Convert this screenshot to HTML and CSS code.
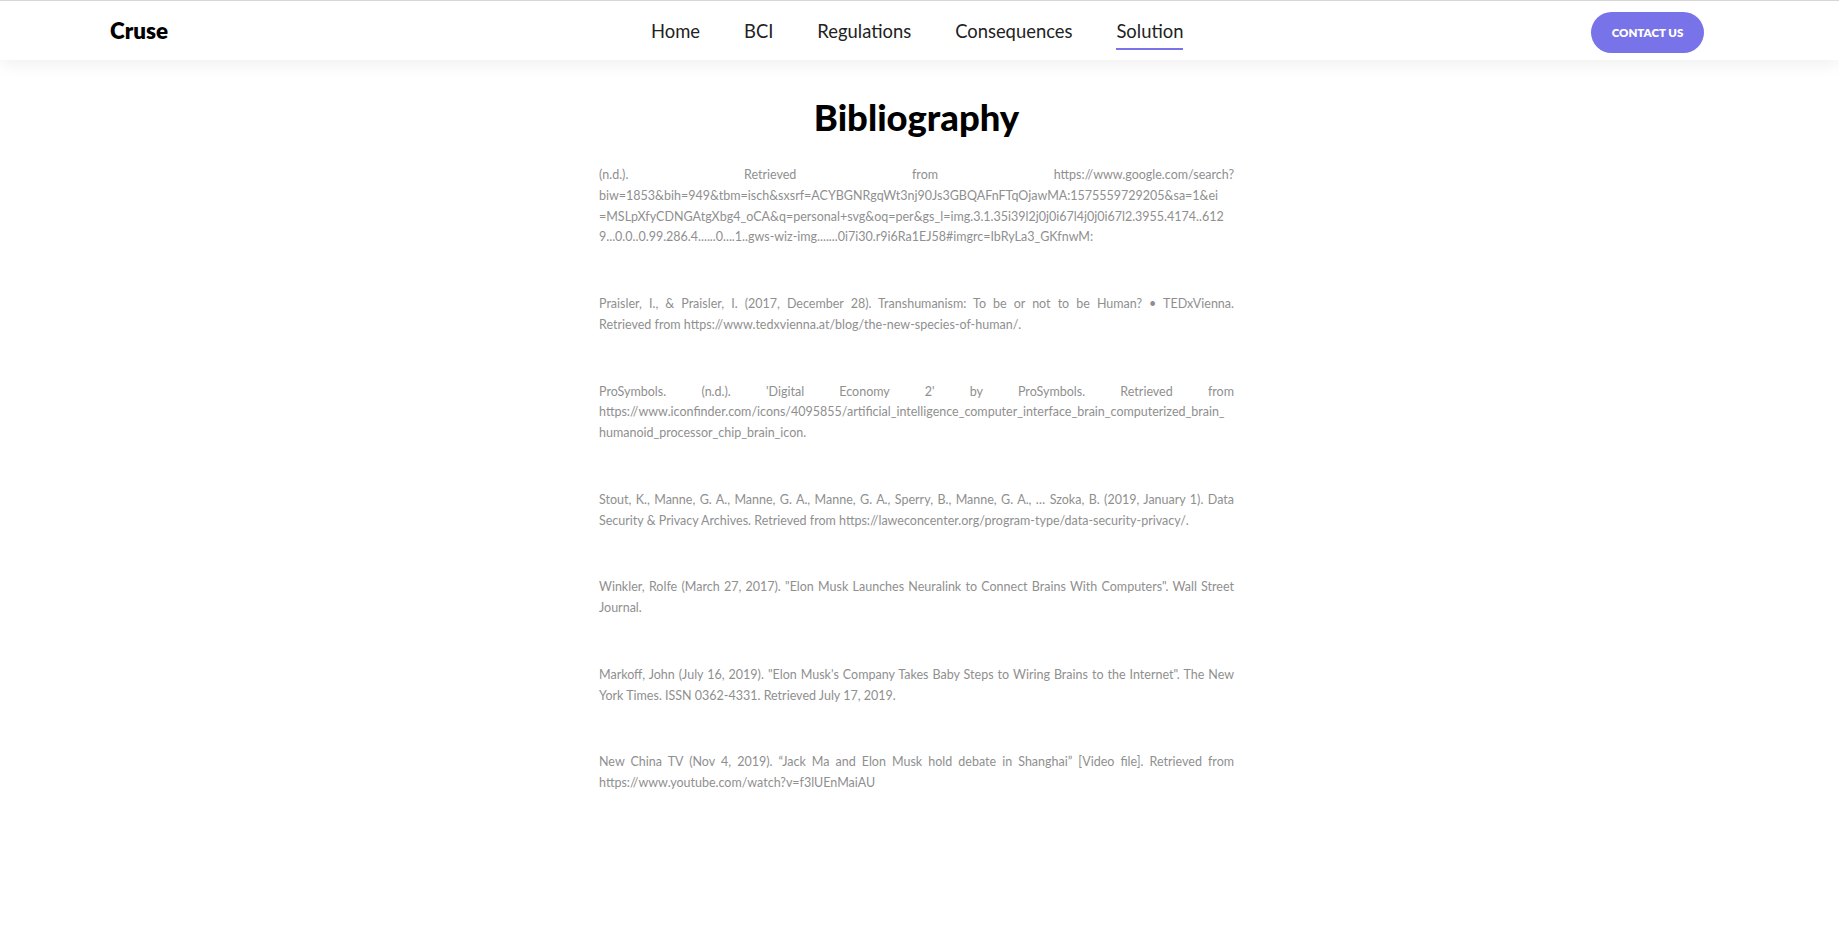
FILE: index.html
```html
<!DOCTYPE html>
<html lang="en">
<head>
<meta charset="utf-8">
<title>Bibliography - Cruse</title>
<link rel="stylesheet" href="styles.css">
</head>
<body>
<header class="site-header">
  <div class="header-inner">
    <a class="logo" href="#">Cruse</a>
    <nav class="main-nav">
      <a href="#">Home</a>
      <a href="#">BCI</a>
      <a href="#">Regulations</a>
      <a href="#">Consequences</a>
      <a href="#" class="active">Solution</a>
    </nav>
    <a class="btn-contact" href="#">CONTACT US</a>
  </div>
</header>
<main class="content">
  <h1 class="page-title">Bibliography</h1>
  <p class="ref">(n.d.). Retrieved from https://www.google.com/search?<wbr>biw=1853&amp;bih=949&amp;tbm=isch&amp;sxsrf=ACYBGNRgqWt3nj90Js3GBQAFnFTqOjawMA:1575559729205&amp;sa=1&amp;ei<br>=MSLpXfyCDNGAtgXbg4_oCA&amp;q=personal+svg&amp;oq=per&amp;gs_l=img.3.1.35i39l2j0j0i67l4j0j0i67l2.3955.4174..612<br>9...0.0..0.99.286.4......0....1..gws-wiz-img.......0i7i30.r9i6Ra1EJ58#imgrc=IbRyLa3_GKfnwM:</p>
  <p class="ref">Praisler, I., &amp; Praisler, I. (2017, December 28). Transhumanism: To be or not to be Human? • TEDxVienna. Retrieved&nbsp;from https://www.tedxvienna.at/blog/the-new-species-of-human/.</p>
  <p class="ref">ProSymbols. (n.d.). 'Digital Economy 2' by ProSymbols. Retrieved from https://www.iconfinder.com/icons/4095855/artificial_intelligence_computer_interface_brain_computerized_brain_<br>humanoid_processor_chip_brain_icon.</p>
  <p class="ref">Stout, K., Manne, G. A., Manne, G. A., Manne, G. A., Sperry, B., Manne, G. A., … Szoka, B. (2019, January 1). Data Security &amp; Privacy Archives. Retrieved from https://laweconcenter.org/program-type/data-security-privacy/.</p>
  <p class="ref">Winkler, Rolfe (March 27, 2017). "Elon Musk Launches Neuralink to Connect Brains With Computers". Wall Street Journal.</p>
  <p class="ref">Markoff, John (July 16, 2019). "Elon Musk's Company Takes Baby Steps to Wiring Brains to the Internet". The New York Times. ISSN 0362-4331. Retrieved July 17, 2019.</p>
  <p class="ref">New China TV (Nov 4, 2019). “Jack Ma and Elon Musk hold debate in Shanghai” [Video file]. Retrieved from https://www.youtube.com/watch?v=f3lUEnMaiAU</p>
</main>
</body>
</html>
```
FILE: styles.css
```css
html, body {
  margin: 0;
  padding: 0;
  background: #ffffff;
}

body {
  font-family: Lato, "Noto Sans", sans-serif;
  color: #1c1c1c;
}

/* ---------- Header ---------- */
.site-header {
  height: 59px;
  border-top: 1px solid #d6d6d6;
  background: #ffffff;
  box-shadow: 0 5px 15px rgba(0, 0, 0, 0.06);
}

.header-inner {
  display: flex;
  align-items: center;
  height: 100%;
  padding: 0 135px 0 110px;
}

.logo {
  width: 541px;
  flex: none;
  font-size: 22.4px;
  font-weight: 800;
  line-height: 26px;
  color: #000000;
  text-decoration: none;
}

.main-nav {
  display: flex;
  gap: 44px;
}

.main-nav a {
  position: relative;
  font-size: 18.4px;
  line-height: 22px;
  color: #222222;
  text-decoration: none;
}

.main-nav a.active::after {
  content: "";
  position: absolute;
  left: 0;
  right: 0;
  top: 28.5px;
  height: 2px;
  background: #7873e8;
}

.btn-contact {
  margin-left: auto;
  margin-top: 4px;
  width: 113px;
  height: 41px;
  border-radius: 21px;
  background: #7873e8;
  color: #ffffff;
  font-size: 11.5px;
  font-weight: 800;
  display: flex;
  align-items: center;
  justify-content: center;
  text-decoration: none;
}

/* ---------- Content ---------- */
.content {
  width: 635px;
  margin-left: 599px;
  padding-bottom: 60px;
}

.page-title {
  margin: 36px 0 27px;
  text-align: center;
  font-size: 36.4px;
  font-weight: 900;
  line-height: 42px;
  color: #000000;
}

.ref {
  margin: 0 0 46px;
  font-size: 12.5px;
  line-height: 20.75px;
  color: #8f8f8f;
  text-align: justify;
  overflow-wrap: break-word;
}
```
